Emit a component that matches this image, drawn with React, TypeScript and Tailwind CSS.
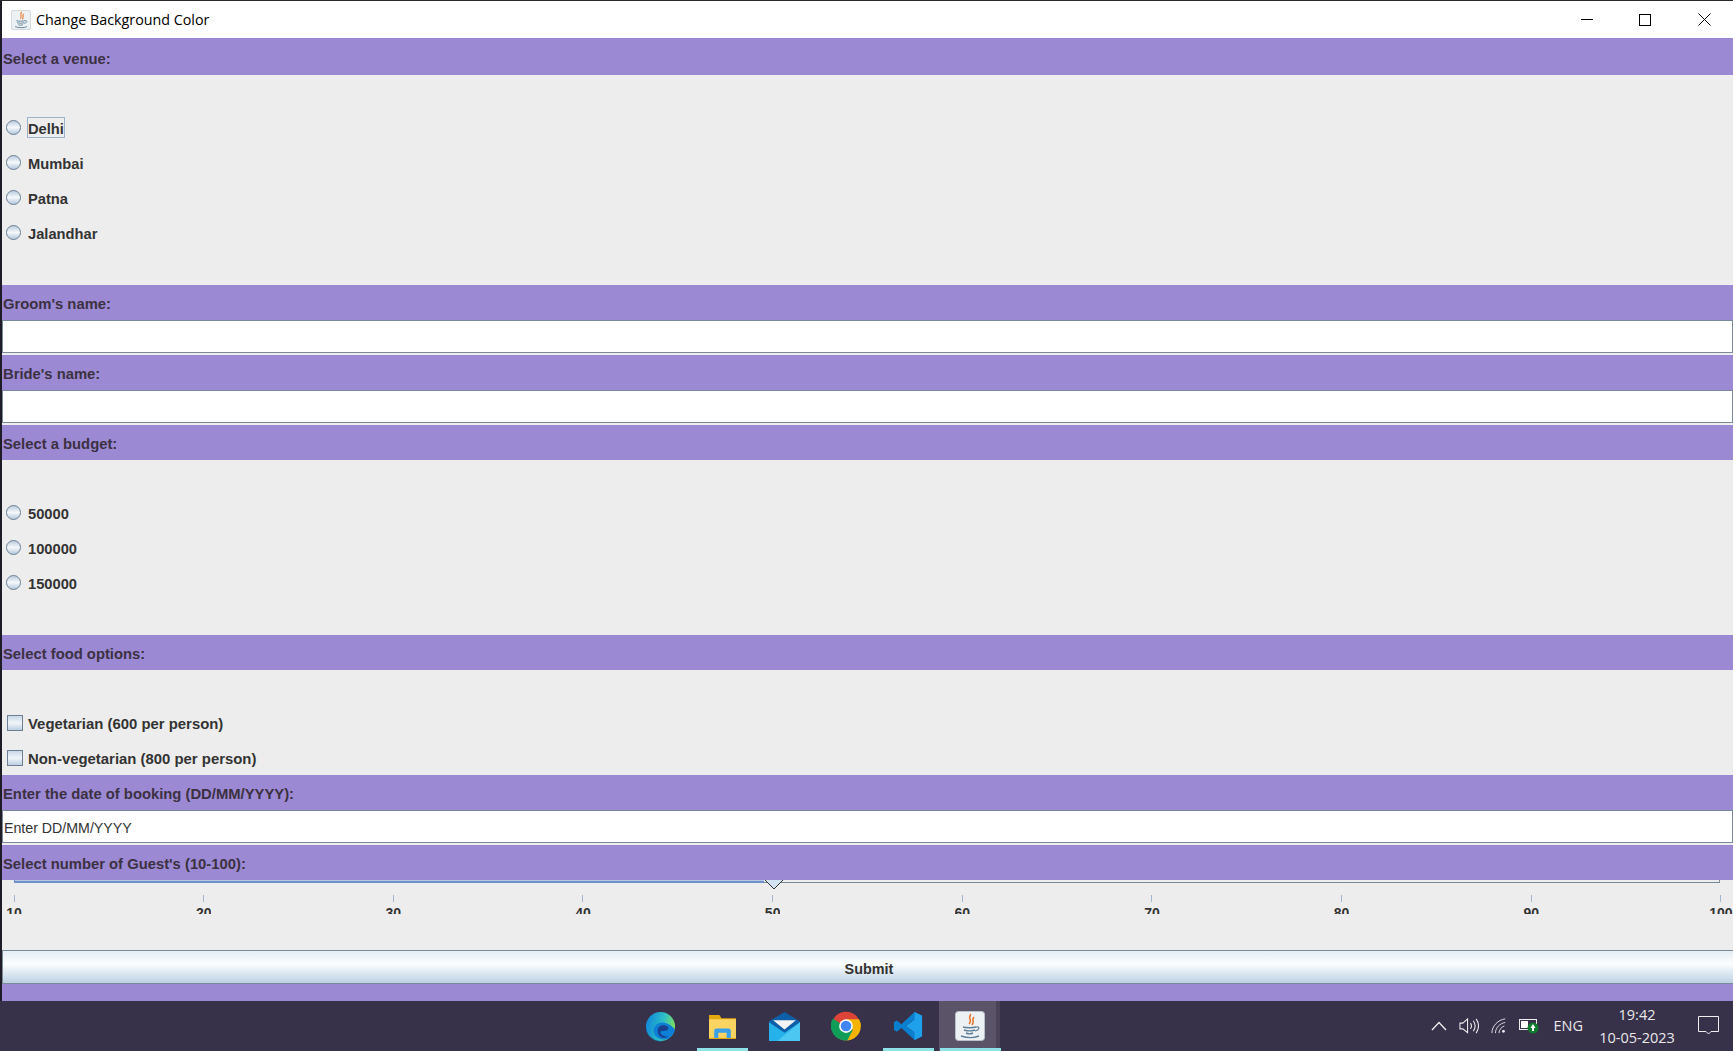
import React from "react";

const Band = ({ text, h }: { text: string; h: string }) => (
  <div className={`${h} shrink-0 bg-[#9b89d3] flex items-center text-[14.8px] font-bold text-[#3c3142] pl-px`}>{text}</div>
);

const Field = ({ text }: { text?: string }) => (
  <div className="h-[33px] shrink-0 bg-white border border-[#7a8a99] flex items-center text-[14.2px] text-[#333] pl-px pt-[5px]">{text}</div>
);

const Radio = ({ label, focus }: { label: string; focus?: boolean }) => (
  <div className="h-[35px] shrink-0 flex items-center pl-[4px] text-[14.7px] font-bold text-[#333]">
    <span className="w-[15px] h-[15px] rounded-full border border-[#6d7f94] bg-gradient-to-b from-[#bccde0] via-[#f5f8fb] to-[#b4c9de] -mt-[1px]" />
    <span className={`ml-[6px] h-[21px] -mt-[1px] pt-[5px] flex items-center border ${focus ? "border-[#9fb3c8]" : "border-transparent"}`}>{label}</span>
  </div>
);

const Check = ({ label }: { label: string }) => (
  <div className="h-[35px] shrink-0 flex items-center pl-[5px] text-[14.9px] font-bold text-[#333]">
    <span className="w-[16px] h-[16px] border border-[#6d7f94] bg-gradient-to-b from-[#c8d8e8] via-[#f1f5f9] to-[#bccfe2]" />
    <span className="ml-[5px] pt-[3px]">{label}</span>
  </div>
);

const Tick = ({ label }: { label: string }) => (
  <div className="w-0 flex flex-col items-center">
    <div className="w-px h-[7px] bg-[#a3b8cc] shrink-0" />
    <div className="h-[8px] mt-[4px] overflow-hidden text-[14px] leading-[14px] font-bold text-[#333] whitespace-nowrap">{label}</div>
  </div>
);

const Slider = () => (
  <div className="h-[70px] shrink-0 relative">
    <div className="ml-[12px] mr-[13px] h-[3px] border-r border-b border-[#7a8a99] flex">
      <div className="w-[750px] bg-[#b5c8e6] border-l border-b-2 border-[#6e90c8] -mb-px" />
    </div>
    <svg className="absolute left-[762px] top-0" width="20" height="10" viewBox="0 0 20 10">
      <path d="M1 0 L10 9 L19 0 Z" fill="#d4e3f2" />
      <path d="M1 0 L10 9 L19 0" fill="none" stroke="#333" strokeWidth="1" />
    </svg>
    <div className="ml-[12px] mr-[12px] mt-[12px] flex justify-between">
      {["10", "20", "30", "40", "50", "60", "70", "80", "90", "100"].map((t) => (
        <Tick key={t} label={t} />
      ))}
    </div>
  </div>
);

const TaskIcons = () => (
  <>
    <div className="w-[62px] h-full flex items-center justify-center">
      <svg width="31" height="31" viewBox="0 0 32 32">
        <defs>
          <linearGradient id="eg" x1="0" y1="0.3" x2="1" y2="0.5">
            <stop offset="0" stopColor="#0f86dc" />
            <stop offset="0.6" stopColor="#2fc0c4" />
            <stop offset="1" stopColor="#7fe05a" />
          </linearGradient>
        </defs>
        <circle cx="16" cy="16" r="15" fill="url(#eg)" />
        <path d="M1 16 A15 15 0 0 0 24 29 C17 31 9 27 9 20 C9 15 14 11 20 12 C26 13 29 17 31 19 C29 27 22 31 16 31 C7 31 1 24 1 16Z" fill="#0d7fd6" />
        <path d="M13 20 C13 16 17 14 21 15 C25 16 25 19 22 20 L16 21 C15 24 19 27 24 26 C19 30 13 26 13 20Z" fill="#1b3f8f" />
      </svg>
    </div>
    <div className="w-[62px] h-full flex items-center justify-center">
      <svg width="29" height="29" viewBox="0 0 28 28">
        <path d="M1 3 H11 L13 6 H27 V26 H1 Z" fill="#e3a90f" />
        <rect x="1" y="7" width="26" height="18" fill="#fbd462" />
        <path d="M6 25 V18 C6 17 7 16 8 16 H20 C21 16 22 17 22 18 V25 H18 V20 H10 V25 Z" fill="#3aa0e8" />
      </svg>
    </div>
    <div className="w-[62px] h-full flex items-center justify-center">
      <svg width="31" height="29" viewBox="0 0 30 28">
        <path d="M15 0 L30 9 V28 H0 V9 Z" fill="#0f5fa8" />
        <path d="M4 8 H26 L15 17 Z" fill="#f3f3f3" />
        <path d="M0 10 L15 20 L30 10 V28 H0Z" fill="#27b1ea" />
        <path d="M30 10 V28 H8 Z" fill="#4cc7f2" />
      </svg>
    </div>
    <div className="w-[62px] h-full flex items-center justify-center">
      <svg width="30" height="30" viewBox="0 0 48 48">
        <circle cx="24" cy="24" r="23" fill="#db4437" />
        <path d="M24 24 L44 35 A23 23 0 0 1 16 46 Z" fill="#0f9d58" />
        <path d="M3 12 A23 23 0 0 0 16 46 L27 28 Z" fill="#0f9d58" />
        <path d="M24 13 H45 A23 23 0 0 1 26 47 L35 30 Z" fill="#f4b400" />
        <circle cx="24" cy="24" r="11" fill="#fff" />
        <circle cx="24" cy="24" r="8.5" fill="#4285f4" />
      </svg>
    </div>
    <div className="w-[62px] h-full flex items-center justify-center">
      <svg width="30" height="30" viewBox="0 0 32 32">
        <path d="M23 1 L31 5 V27 L23 31 L9 18 L4 22 L1 20 V12 L4 10 L9 14 Z M23 9 L14 16 L23 23 Z" fill="#0a7fd0" fillRule="evenodd" />
        <path d="M23 1 L31 5 V27 L23 31 Z M23 9 V23 L14 16Z" fill="#1fa0ea" fillRule="evenodd" />
      </svg>
    </div>
  </>
);

const JavaIcon = ({ size }: { size: number }) => (
  <svg width={size} height={size} viewBox="0 0 30 30">
    <rect x="0.5" y="0.5" width="29" height="29" rx="3" fill="#eef1f3" stroke="#b9c2c9" />
    <path d="M16 3 C12 7 18 9 14 13 M19 6 C16 9 20 10 17 14" fill="none" stroke="#e8762c" strokeWidth="1.6" />
    <path d="M8 16 C11 17 18 17 21 16 M9 19 C12 20 17 20 20 19 M11 22 C13 23 16 23 18 22" fill="none" stroke="#5d7f99" strokeWidth="1.4" />
    <path d="M21 16 C25 15 25 19 20 20" fill="none" stroke="#5d7f99" strokeWidth="1.2" />
    <path d="M6 25 C12 27 19 27 24 25" fill="none" stroke="#5d7f99" strokeWidth="1.4" />
  </svg>
);

const Tray = () => (
  <div className="absolute right-0 top-0 h-full flex items-center text-white">
    <svg className="mr-[12px]" width="16" height="10" viewBox="0 0 16 10"><path d="M1 9 L8 1.5 L15 9" fill="none" stroke="#eee" strokeWidth="1.3" /></svg>
    <svg className="mr-[12px]" width="20" height="18" viewBox="0 0 21 18"><path d="M1 6 H4 L9 1.5 V16 L4 12 H1 Z M12 6 C13.5 8 13.5 10 12 12 M15 3.5 C17.5 7 17.5 11 15 14.5 M18 1.5 C21 6 21 12 18 16.5" fill="none" stroke="#eee" strokeWidth="1.1" /></svg>
    <svg className="mr-[12px]" width="16" height="16" viewBox="0 0 18 18"><path d="M1 17 C1 9 8 2 16 1 M5 17 C5 11 10 6 16 5 M9 17 C9 13 12 10 15 9" fill="none" stroke="#ddd" strokeWidth="1.1" /><circle cx="14" cy="15" r="1.6" fill="#eee" /></svg>
    <svg className="mr-[14px]" width="20" height="16" viewBox="0 0 20 16">
      <rect x="0.5" y="1.5" width="17" height="10" fill="none" stroke="#eee" />
      <rect x="2" y="3" width="7" height="7" fill="#fff" />
      <circle cx="14" cy="10" r="5.5" fill="#0f7b2e" />
      <path d="M14 6 L16.5 10 H15 V13 H13 V10 H11.5 Z" fill="#fff" />
    </svg>
    <div className="mr-[15px] text-[14.5px] text-[#e8e8e8] font-['Open_Sans',sans-serif]">ENG</div>
    <div className="w-[78px] mr-[7px] flex flex-col items-center text-[14.5px] leading-[23px] text-[#e8e8e8] font-['Open_Sans',sans-serif]">
      <div>19:42</div>
      <div>10-05-2023</div>
    </div>
    <div className="w-[50px] flex justify-center">
      <svg width="21" height="20" viewBox="0 0 21 20"><path d="M0.5 0.5 H20.5 V15.5 H13 L10.5 18 L8 15.5 H0.5 Z" fill="none" stroke="#eee" /></svg>
    </div>
  </div>
);

export default function App() {
  return (
    <div className="w-[1733px] h-[1051px] overflow-hidden bg-[#1e1c26] flex flex-col font-['Liberation_Sans',sans-serif]">
      <div className="h-px shrink-0 bg-[#2a2830]" />
      <div className="flex-1 min-h-0 ml-[2px] flex flex-col bg-[#ededed]">
        <div className="h-[37px] shrink-0 bg-white flex items-center">
          <div className="ml-[9px]"><JavaIcon size={20} /></div>
          <span className="ml-[5px] text-[14.3px] text-black font-['Open_Sans',sans-serif]">Change Background Color</span>
          <div className="ml-auto flex items-center h-full">
            <div className="w-[58px] flex justify-center"><div className="w-[12px] h-px bg-black" /></div>
            <div className="w-[58px] mr-px flex justify-center"><div className="w-[12px] h-[12px] border border-black" /></div>
            <div className="w-[58px] flex justify-center">
              <svg width="13" height="13" viewBox="0 0 13 13"><path d="M0.5 0.5 L12.5 12.5 M12.5 0.5 L0.5 12.5" stroke="#000" strokeWidth="1" /></svg>
            </div>
          </div>
        </div>
        <Band text="Select a venue:" h="h-[37px] pt-[5px]" />
        <div className="h-[210px] shrink-0 flex flex-col pt-[35px]">
          <Radio label="Delhi" focus />
          <Radio label="Mumbai" />
          <Radio label="Patna" />
          <Radio label="Jalandhar" />
        </div>
        <Band text="Groom's name:" h="h-[35px] pt-[4px]" />
        <Field />
        <div className="h-[2px] shrink-0" />
        <Band text="Bride's name:" h="h-[35px] pt-[4px]" />
        <Field />
        <div className="h-[2px] shrink-0" />
        <Band text="Select a budget:" h="h-[35px] pt-[4px]" />
        <div className="h-[175px] shrink-0 flex flex-col pt-[35px]">
          <Radio label="50000" />
          <Radio label="100000" />
          <Radio label="150000" />
        </div>
        <Band text="Select food options:" h="h-[35px] pt-[4px]" />
        <div className="h-[105px] shrink-0 flex flex-col pt-[35px]">
          <Check label="Vegetarian (600 per person)" />
          <Check label="Non-vegetarian (800 per person)" />
        </div>
        <Band text="Enter the date of booking (DD/MM/YYYY):" h="h-[35px] pt-[4px]" />
        <Field text="Enter DD/MM/YYYY" />
        <div className="h-[2px] shrink-0" />
        <Band text="Select number of Guest's (10-100):" h="h-[35px] pt-[4px]" />
        <Slider />
        <div className="h-[34px] shrink-0 border-y border-l border-[#7a8a99] bg-gradient-to-b from-[#e4edf5] via-[#fbfdfe] via-40% to-[#bdd2e3] flex items-center justify-center text-[14.4px] font-bold text-[#333] pt-[5px] pl-[2px]">
          Submit
        </div>
        <div className="h-[17px] shrink-0 bg-[#9b89d3]" />
      </div>
      <div className="h-[50px] shrink-0 bg-[#38314a] relative flex items-center justify-center">
        <div className="flex h-full absolute left-[629px] top-0">
          <TaskIcons />
          <div className="w-[61px] h-full bg-[#5b5468] flex items-center justify-center">
            <JavaIcon size={30} />
          </div>
        </div>
        <div className="absolute left-[996px] top-0 w-[4px] h-full bg-[#4a4358]" />
        <div className="absolute left-[697px] bottom-0 w-[51px] h-[3px] bg-[#8ee3e6]" />
        <div className="absolute left-[883px] bottom-0 w-[51px] h-[3px] bg-[#8ee3e6]" />
        <div className="absolute left-[940px] bottom-0 w-[61px] h-[3px] bg-[#8ee3e6]" />
        <Tray />
      </div>
    </div>
  );
}
